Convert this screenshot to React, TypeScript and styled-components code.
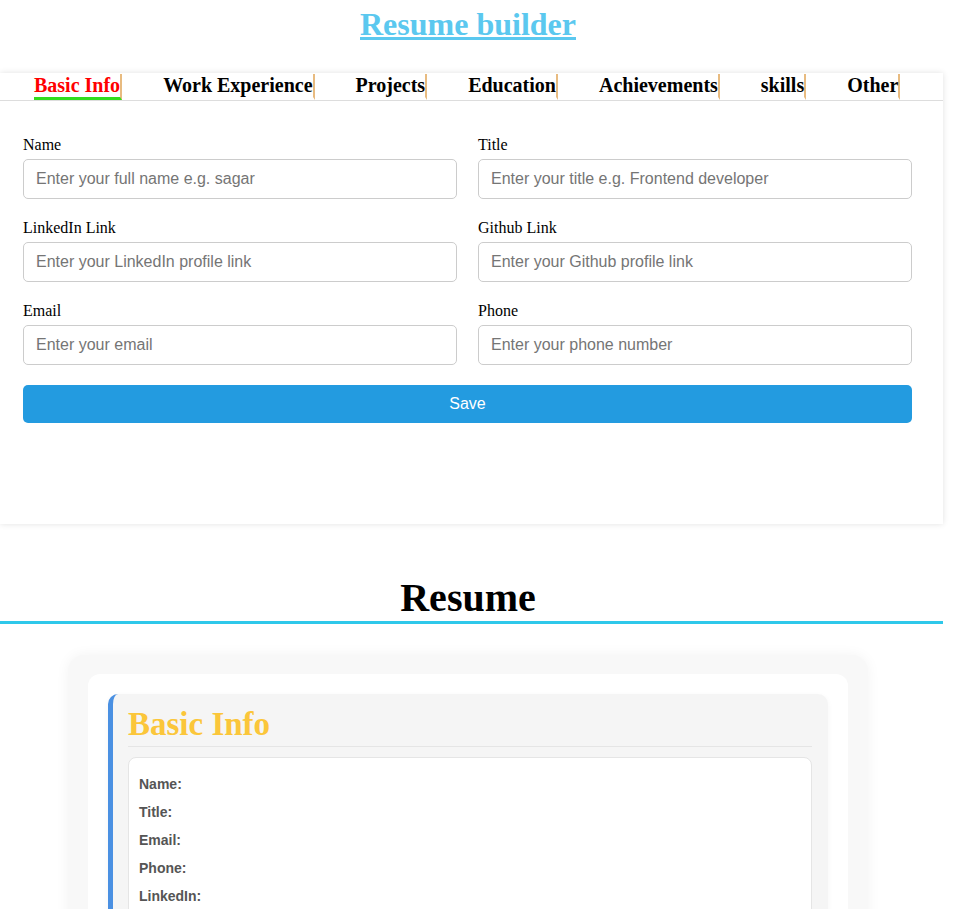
import React from "react";
import styled, { createGlobalStyle } from "styled-components";

const Global = createGlobalStyle`
  body {
    margin: 0;
    background: #fff;
    font-family: "Liberation Serif", "Times New Roman", serif;
  }
`;

const Page = styled.div`
  width: 936px;
`;

const Title = styled.h1`
  margin: 6px 0 0;
  text-align: center;
  font-size: 32px;
  font-weight: bold;
  line-height: normal;
`;

const TitleLink = styled.a`
  color: #5bc8ef;
  text-decoration: underline;
`;

const Panel = styled.section`
  width: 943px;
  margin-top: 30px;
  padding-top: 1px;
  background: #fff;
  box-shadow: 0 0 6px rgba(0, 0, 0, 0.12);
`;

const TabBar = styled.nav`
  display: flex;
  gap: 41px;
  padding-left: 34px;
  border-bottom: 1px solid #dddddd;
`;

const Tab = styled.div<{ $active?: boolean }>`
  font-size: 20px;
  font-weight: bold;
  line-height: 23px;
  color: ${(p) => (p.$active ? "#ff0000" : "#000")};
  border-right: 2px solid #e8bb80;
  border-bottom: 3px solid ${(p) => (p.$active ? "#33dd1e" : "transparent")};
  cursor: pointer;
  white-space: nowrap;
`;

const Form = styled.form`
  display: grid;
  grid-template-columns: 1fr 1fr;
  column-gap: 21px;
  row-gap: 20px;
  padding: 35px 31px 101px 23px;
`;

const Field = styled.div`
  display: flex;
  flex-direction: column;
`;

const Label = styled.label`
  font-size: 16px;
  line-height: 18px;
  margin-bottom: 5px;
  color: #000;
`;

const Input = styled.input`
  box-sizing: border-box;
  height: 40px;
  border: 1px solid #cccccc;
  border-radius: 5px;
  padding: 0 12px;
  font-family: "Liberation Sans", Arial, sans-serif;
  font-size: 16px;
  color: #333;
  outline: none;
  &::placeholder {
    color: #757575;
  }
`;

const SaveButton = styled.button`
  grid-column: 1 / -1;
  height: 38px;
  border: none;
  border-radius: 5px;
  background: #239be0;
  color: #fff;
  font-family: "Liberation Sans", Arial, sans-serif;
  font-size: 16px;
  cursor: pointer;
`;

const ResumeHeading = styled.h2`
  width: 943px;
  box-sizing: border-box;
  padding-right: 7px;
  margin: 50px 0 0;
  text-align: center;
  font-size: 40px;
  font-weight: bold;
  line-height: normal;
  border-bottom: 3px solid #2ec8ea;
`;

const OuterCard = styled.div`
  width: 800px;
  box-sizing: border-box;
  margin: 31px auto 0;
  padding: 19px 20px 20px;
  background: #f8f8f8;
  border-radius: 16px;
  box-shadow: 0 0 14px rgba(0, 0, 0, 0.05);
`;

const InnerCard = styled.div`
  background: #fff;
  border-radius: 12px;
  padding: 20px;
`;

const Section = styled.div`
  background: #f5f5f5;
  border-left: 5px solid #4a90e2;
  border-radius: 10px;
  padding: 12px 16px 15px 15px;
  box-shadow: 0 2px 6px rgba(0, 0, 0, 0.04);
`;

const SectionTitle = styled.h3`
  margin: 0;
  padding-bottom: 3px;
  border-bottom: 1px solid #e5e5e5;
  font-family: "Liberation Serif", Georgia, serif;
  font-size: 33px;
  font-weight: 700;
  line-height: normal;
  color: #fbc63a;
`;

const InfoBox = styled.div`
  margin-top: 10px;
  background: #fff;
  border: 1px solid #e5e5e5;
  border-radius: 8px;
  padding: 16px 10px;
`;

const InfoRow = styled.div`
  font-family: "Liberation Sans", Arial, sans-serif;
  font-size: 14px;
  font-weight: bold;
  line-height: 20px;
  color: #555;
  margin-bottom: 8px;
`;

const tabs = [
  "Basic Info",
  "Work Experience",
  "Projects",
  "Education",
  "Achievements",
  "skills",
  "Other",
];

const fields = [
  { label: "Name", placeholder: "Enter your full name e.g. sagar" },
  { label: "Title", placeholder: "Enter your title e.g. Frontend developer" },
  { label: "LinkedIn Link", placeholder: "Enter your LinkedIn profile link" },
  { label: "Github Link", placeholder: "Enter your Github profile link" },
  { label: "Email", placeholder: "Enter your email" },
  { label: "Phone", placeholder: "Enter your phone number" },
];

const infoRows = ["Name:", "Title:", "Email:", "Phone:", "LinkedIn:", "Github:"];

export default function App() {
  return (
    <Page>
      <Global />
      <Title>
        <TitleLink href="#">Resume builder</TitleLink>
      </Title>
      <Panel>
        <TabBar>
          {tabs.map((t, i) => (
            <Tab key={t} $active={i === 0}>
              {t}
            </Tab>
          ))}
        </TabBar>
        <Form onSubmit={(e) => e.preventDefault()}>
          {fields.map((f) => (
            <Field key={f.label}>
              <Label>{f.label}</Label>
              <Input placeholder={f.placeholder} />
            </Field>
          ))}
          <SaveButton type="submit">Save</SaveButton>
        </Form>
      </Panel>
      <ResumeHeading>Resume</ResumeHeading>
      <OuterCard>
        <InnerCard>
          <Section>
            <SectionTitle>Basic Info</SectionTitle>
            <InfoBox>
              {infoRows.map((r) => (
                <InfoRow key={r}>{r}</InfoRow>
              ))}
            </InfoBox>
          </Section>
        </InnerCard>
      </OuterCard>
    </Page>
  );
}
